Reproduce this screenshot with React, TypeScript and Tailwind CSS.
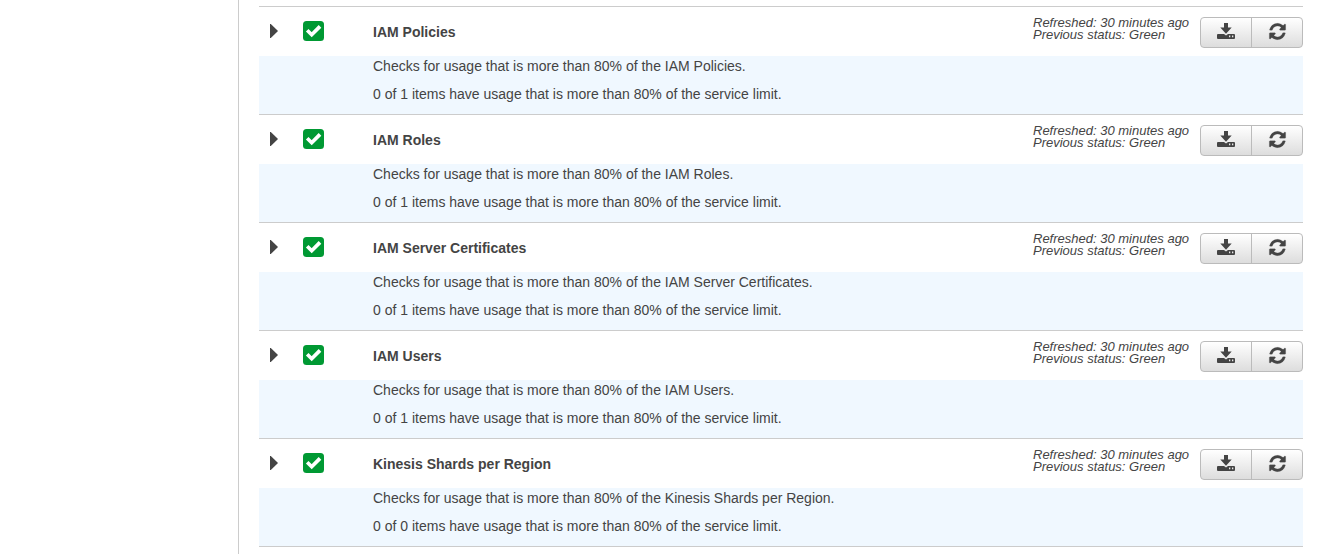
type Check = { name: string; items: number };

const checks: Check[] = [
  { name: "IAM Policies", items: 1 },
  { name: "IAM Roles", items: 1 },
  { name: "IAM Server Certificates", items: 1 },
  { name: "IAM Users", items: 1 },
  { name: "Kinesis Shards per Region", items: 0 },
];

function CheckIcon() {
  return (
    <svg viewBox="0 0 21 20" className="h-5 w-[21px]" role="img" aria-label="OK">
      <rect width="21" height="20" rx="3.5" fill="#009933" />
      <path d="M4.2 9.3L8.7 13.7L17 5.4" fill="none" stroke="#fff" strokeWidth="3.7" />
    </svg>
  );
}

function DownloadIcon() {
  return (
    <svg viewBox="0 0 18 16" className="h-4 w-[18px] fill-current" aria-hidden="true">
      <path d="M7 0H11V4.5H14.7L9 10.8L3.3 4.5H7Z" />
      <path
        fillRule="evenodd"
        d="M1 11H7L9 12.6L11 11H17Q18 11 18 12V15Q18 16 17 16H1Q0 16 0 15V12Q0 11 1 11ZM12 12.5V14.3H13.3V12.5ZM15 12.5V14.3H16.3V12.5Z"
      />
    </svg>
  );
}

function RefreshIcon() {
  return (
    <svg viewBox="0 0 1792 1792" className="size-[19px] fill-current stroke-current stroke-[20]" aria-hidden="true">
      <path d="M1639 1056q0 5-1 7-64 268-268 434.5t-478 166.5q-146 0-282.5-55t-243.5-157l-129 129q-19 19-45 19t-45-19-19-45v-448q0-26 19-45t45-19h448q26 0 45 19t19 45-19 45l-137 137q71 66 161 102t187 36q134 0 250-65t186-179q11-17 53-117 8-23 30-23h192q13 0 22.5 9.5t9.5 22.5zm25-800v448q0 26-19 45t-45 19h-448q-26 0-45-19t-19-45 19-45l138-138q-148-137-349-137-134 0-250 65t-186 179q-11 17-53 117-8 23-30 23h-199q-13 0-22.5-9.5t-9.5-22.5v-7q65-268 270-434.5t480-166.5q146 0 284 55.5t245 156.5l130-129q19-19 45-19t45 19 19 45z" />
    </svg>
  );
}

function CheckRow({ name, items }: Check) {
  return (
    <li className="border-b border-[#ccc]">
      <div className="flex h-[49px]">
        <button type="button" aria-label={`Expand ${name}`} className="flex h-12 w-11 items-center pl-[11px]">
          <svg viewBox="0 0 8 14" className="h-3.5 w-2 fill-current" aria-hidden="true">
            <path d="M0 0H0.8L8 7L0.8 14H0Z" />
          </svg>
        </button>
        <div className="flex h-12 w-[70px] items-center">
          <CheckIcon />
        </div>
        <h3 className="flex-1 pt-[15px] font-bold leading-5">{name}</h3>
        <p className="w-[167px] pt-2.5 text-[13px] leading-3 italic">
          Refreshed: 30 minutes ago
          <br />
          Previous status: Green
        </p>
        <div className="mt-2.5 flex h-[31px] w-[103px] divide-x divide-[#bbb] rounded border border-[#bbb] bg-linear-to-b from-white to-[#ddd]">
          <button type="button" aria-label={`Download ${name}`} className="flex flex-1 items-center justify-center pb-[3px]">
            <DownloadIcon />
          </button>
          <button type="button" aria-label={`Refresh ${name}`} className="flex flex-1 items-center justify-center pb-0.5">
            <RefreshIcon />
          </button>
        </div>
      </div>
      <div className="space-y-2 bg-[#f0f8ff] pb-2.5 pl-[114px] leading-5">
        <p>Checks for usage that is more than 80% of the {name}.</p>
        <p>0 of {items} items have usage that is more than 80% of the service limit.</p>
      </div>
    </li>
  );
}

export default function App() {
  return (
    <div className="flex min-h-screen bg-white font-['Liberation_Sans',Arial,sans-serif] text-sm text-[#444]">
      <div className="w-[238px] shrink-0" />
      <main className="flex-1 border-l border-[#ccc] pt-1.5 pr-[35px] pl-5">
        <ul className="border-t border-[#ccc]">
          {checks.map((check) => (
            <CheckRow key={check.name} {...check} />
          ))}
        </ul>
      </main>
    </div>
  );
}
